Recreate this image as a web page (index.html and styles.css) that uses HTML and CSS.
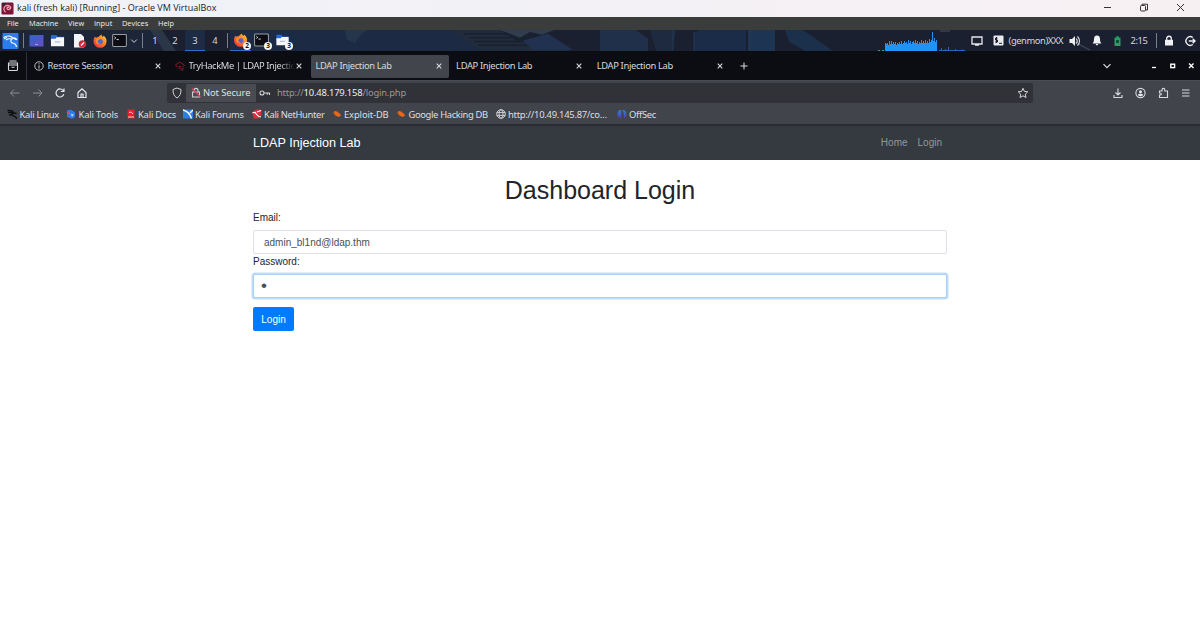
FILE: index.html
```html
<!DOCTYPE html>
<html lang="en">
<head>
    <meta charset="UTF-8">
    <meta name="viewport" content="width=device-width, initial-scale=1.0">
    <title>LDAP Injection Lab</title>
    <link rel="stylesheet" href="styles.css">
</head>
<body>
    <!-- shared icons -->
    <svg class="defs" width="0" height="0">
        <defs>
            <linearGradient id="fire" x1="1" y1="0" x2="0" y2="1">
                <stop offset="0" stop-color="#ffd83a"/>
                <stop offset=".5" stop-color="#ff7425"/>
                <stop offset="1" stop-color="#e9274d"/>
            </linearGradient>
            <linearGradient id="desk" x1="0" y1="0" x2="1" y2="1">
                <stop offset="0" stop-color="#2f62cf"/>
                <stop offset="1" stop-color="#6a4fc0"/>
            </linearGradient>
            <linearGradient id="offsec" x1="0" y1="0" x2="0" y2="1">
                <stop offset="0" stop-color="#2389d6"/>
                <stop offset="1" stop-color="#5a35c4"/>
            </linearGradient>
        </defs>
        <symbol id="i-firefox" viewBox="0 0 16 16">
            <path d="M2.2 3.2c.6.2 1 .6 1.4 1.1C4.7 3.500 5.500 3.500 6 3.600 7 2.500 8.500 1.200 9.800.5c-.1 1.300.6 2 1.600 2.700.5-.4.7-.9.7-1.500 2 1.600 3.400 3.900 3.400 6.600A7.400 7.400 0 0 1 .6 8.500C.5 6.500 1 4.700 2.200 3.200z" fill="url(#fire)"/>
            <circle cx="8.200" cy="8.700" r="3" fill="#5063d8"/>
            <path d="M3 6c2-1.500 4-1 5.200.3-1.500.1-2.700.9-2.700 2.200 0 1.500 1.300 2.500 3 2.300-2 1.700-5 .5-5.500-2z" fill="#ff8a20"/>
        </symbol>
        <symbol id="i-folder" viewBox="0 0 16 16">
            <path d="M1 2h6l1 2h7v5H1z" fill="#2468d8"/>
            <path d="M1 6h5l1-1.500h8V14H1z" fill="#f4f6fa"/>
            <path d="M5 9.500h6" stroke="#9aabc9" stroke-width="1"/>
        </symbol>
        <symbol id="i-term" viewBox="0 0 16 14">
            <rect x=".6" y=".6" width="14.800" height="12.800" rx="1" fill="#0b0d12" stroke="#9b9da3" stroke-width="1.100"/>
            <path d="M2.500 3l1.500 1.200-1.500 1.200M4.800 6h2.400" fill="none" stroke="#fff" stroke-width=".9"/>
        </symbol>
        <symbol id="i-x" viewBox="0 0 8 8">
            <path d="M1.700 1.700l4.600 4.600M6.300 1.700l-4.600 4.600" stroke="currentColor" stroke-width="1.100" fill="none"/>
        </symbol>
        <symbol id="i-chev" viewBox="0 0 10 10">
            <path d="M1.500 3.200L5 6.700l3.500-3.500" stroke="currentColor" stroke-width="1.200" fill="none"/>
        </symbol>
        <symbol id="i-edb" viewBox="0 0 10 10">
            <path d="M1.500 3l1.500-1 2 .6 3 2.200.8 2L7 8 4.800 7.300 2.500 5.500z" fill="#e8671b"/>
            <path d="M.5 4l2 .3M3.500 7l-.5 1.300M6 2.500l.6-1M8.500 5l1-.4" stroke="#a84a18" stroke-width=".6"/>
        </symbol>
    </svg>

    <div class="vm-title">
        <svg class="vm-icon" viewBox="0 0 14 14">
            <rect x=".5" y=".5" width="13" height="13" rx="1.500" fill="#7c1735"/>
            <path d="M1 1h5L2 5z" fill="#2d2b38"/>
            <path d="M10.500 5.500A4 4 0 1 0 5 11M10.500 5.500C10.500 9 6 9 6.500 6.500c.5-1.500 2.500-1 2 .3" fill="none" stroke="#f2a5b8" stroke-width="1.300"/>
        </svg>
        <span class="vm-name">kali (fresh kali) [Running] - Oracle VM VirtualBox</span>
        <svg class="vm-controls" viewBox="0 0 90 17">
            <g fill="none" stroke="#333" stroke-width="1">
                <path d="M4 7.500h7"/>
                <rect x="40.500" y="5.500" width="5" height="5.500" rx="1"/>
                <path d="M42 5.500V4.200h5.500V10H46"/>
                <path d="M77 4l7 7M84 4l-7 7"/>
            </g>
        </svg>
    </div>

    <div class="vm-menu">
        <span class="m-file">File</span>
        <span class="m-machine">Machine</span>
        <span class="m-view">View</span>
        <span class="m-input">Input</span>
        <span class="m-devices">Devices</span>
        <span class="m-help">Help</span>
    </div>

    <div class="panel">
        <svg class="wallpaper" viewBox="0 0 1200 22" preserveAspectRatio="none">
            <rect width="1200" height="22" fill="#1b2030"/>
            <path d="M0 0h155l15 22H0z" fill="#1d2639"/>
            <path d="M150 0h12l14 22h-12z" fill="#2b3647"/>
            <path d="M230 0h235l20 22H230z" fill="#1c2a44"/>
            <path d="M345 0h22l-6 5-6 9-8-4z" fill="#26364a"/>
            <path d="M450 0h50l16 11h20l34 11H480z" fill="#202b3b"/>
            <path d="M464 4h48M469 8h56M474 12h66M478 16h70" stroke="#18202e" stroke-width="1.500"/>
            <path d="M500 0h54l-12 5-12-3-10 6z" fill="#2f3d4e"/>
            <path d="M548 4l25 17h-40l-10-10z" fill="#20324f"/>
            <path d="M600 0h36l12 9v13h-48z" fill="#20304b"/>
            <path d="M650 0h26l-4 22h-16z" fill="#1d2a40"/>
            <path d="M694 3l6-3h46v22h-52z" fill="#1b2c48"/>
            <path d="M748 0h27v22h-27z" fill="#1d3452"/>
            <path d="M785 0h18l30 22h-28l-16-10z" fill="#1b304b"/>
            <path d="M673 0v22M694 2v20M750 0v22" stroke="#283a54" stroke-width="1"/>
            <path d="M940 1h10M1070 10l20 11" stroke="#384252" stroke-width="1.500"/>
        </svg>
        <div class="panel-row">
            <svg class="kali" viewBox="0 0 17 16">
                <rect x=".5" width="16" height="16" rx="1" fill="#2b7df0"/>
                <path d="M1.500 4.500C5 2.500 8.500 2.500 11 5l3 1.500M4 7c2-1.500 4-1.500 6-1-2 1.500-1.500 4 1.500 4.200 1.800.2 2.700 1.500 3 3.800M11 5c2.500-.5 3.500.5 4 2M2 5.800l3-1.200" fill="none" stroke="#fff" stroke-width="1.100"/>
            </svg>
            <i class="sep sep-a"></i>
            <svg class="desk" viewBox="0 0 14 12">
                <rect width="14" height="11.500" rx=".6" fill="url(#desk)"/>
                <path d="M5.500 9.500h3" stroke="#b7b4ea" stroke-width=".8"/>
            </svg>
            <svg class="files"><use href="#i-folder"/></svg>
            <svg class="doc" viewBox="0 0 14 14">
                <path d="M1 0h7l3 3v10.500H1z" fill="#f3f4f7"/>
                <circle cx="9.500" cy="10" r="3.800" fill="#d22a3c"/>
                <path d="M8 11.500l3-3" stroke="#fff" stroke-width="1.200"/>
            </svg>
            <svg class="fox"><use href="#i-firefox"/></svg>
            <svg class="term"><use href="#i-term"/></svg>
            <svg class="drop"><use href="#i-chev"/></svg>
            <i class="sep sep-b"></i>
            <span class="space">1</span>
            <span class="space">2</span>
            <span class="space current">3</span>
            <span class="space">4</span>
            <i class="sep sep-c"></i>
            <div class="task active"><svg><use href="#i-firefox"/></svg><b>2</b></div>
            <div class="task"><svg><use href="#i-term"/></svg><b>3</b></div>
            <div class="task"><svg><use href="#i-folder"/></svg><b>3</b></div>

            <svg class="cpu" viewBox="0 0 88 19">
                <path d="M7 19V11h1v1h1v-1h1v2h1v-4h1v3h1V9h1v3h1v-2h1v2h1v-2h1v3h1v-2h1v1h1v-2h1v2h1v-3h1v3h1v-1h1v-2h1v2h1v-1h1v2h1v-4h1v3h1v-2h1v3h1v-2h1v-1h1v2h1V8h1v3h1v-2h1v3h1v-2h1v1h1V8h1v3h1V9h1v2h1V8h1v3h1V9h1v2h1V7h1v3h1V8h1V0h1v9h1V6h1v4h1V8h1v11z" fill="#2492f5"/>
                <path d="M63.500 19v-3M67.500 19v-2M70.500 19v-4M73.500 19v-1M77.500 19v-2M80.500 19v-1M84.500 19v-1.500M61 18.500h26" stroke="#2c62c8"/>
                <path d="M0 18.500h2M4 18.500h2" stroke="#35a080"/>
            </svg>
            <svg class="tray-mon" viewBox="0 0 12 12"><path d="M1 2h10v7H1zM4 10h4" fill="none" stroke="#e4e6ea" stroke-width="1.300"/></svg>
            <svg class="tray-gen" viewBox="0 0 11 11">
                <rect x=".5" y=".5" width="10" height="10" rx="1" fill="#e9eaee"/>
                <path d="M4.500 3H2.500v2H4.500v2H2M3.500 2v6M6 8.300h3" fill="none" stroke="#1b2132" stroke-width="1"/>
            </svg>
            <span class="genmon">(genmon)XXX</span>
            <svg class="tray-vol" viewBox="0 0 12 12">
                <path d="M.5 4H3l3-3v10L3 8H.5z" fill="#eceef1"/>
                <path d="M7.200 3.500c1.300 1.500 1.300 3.500 0 5M8.500 1.500c2.700 2.500 2.700 6.500 0 9" fill="none" stroke="#dfe1e6" stroke-width="1.100"/>
            </svg>
            <svg class="tray-bell" viewBox="0 0 10 11"><path d="M5 .5c2.200 0 3 1.700 3 3.500 0 2.500.5 3.500 1.500 4.500H.5C1.500 7.500 2 6.500 2 4 2 2.200 2.800.5 5 .5zM3.700 9h2.600c0 1.800-2.600 1.800-2.600 0z" fill="#f2f3f5"/></svg>
            <svg class="tray-bat" viewBox="0 0 7 10"><path d="M2.500 0h2v1.500H6.500V10H.5V1.500h2z" fill="#23a066"/><rect x="2.200" y="4" width="2.600" height="3" fill="#123f30"/></svg>
            <span class="clock">2:15</span>
            <i class="sep sep-d"></i>
            <svg class="tray-lock" viewBox="0 0 10 11"><path d="M1 4.800h8v5.700H1z" fill="#f0f1f3"/><path d="M2.700 5V3.500c0-3 4.600-3 4.600 0V5" fill="none" stroke="#f0f1f3" stroke-width="1.300"/></svg>
            <svg class="tray-out" viewBox="0 0 12 12"><path d="M8.800 2.500a4.300 4.300 0 1 0 0 7M4.800 6h6M8.700 3.800L11 6 8.700 8.200" fill="none" stroke="#eceef1" stroke-width="1.400"/></svg>
        </div>
    </div>

    <div class="tabs">
        <div class="tab-view">
            <svg viewBox="0 0 12 12"><path d="M2.500 1h7M1.500 3h9v6.500a1 1 0 0 1-1 1h-7a1 1 0 0 1-1-1zM1.500 5h9M4.500 7.200h3" fill="none" stroke="#d9dade" stroke-width="1.100"/></svg>
        </div>
        <div class="tab tab-restore">
            <svg class="tab-ico" viewBox="0 0 10 10"><circle cx="5" cy="5" r="4.200" fill="none" stroke="#cfd0d4" stroke-width=".9"/><path d="M5 2.300v1.100M5 4.300v3.200" stroke="#cfd0d4" stroke-width="1"/></svg>
            <span>Restore Session</span>
            <svg class="close"><use href="#i-x"/></svg>
        </div>
        <div class="tab tab-thm">
            <svg class="tab-ico" viewBox="0 0 10 10"><path d="M2.500 5.500C0 5.500.3 2.800 2.400 3 3 .8 6.500.8 7 3c2.500-.2 3 2.500.8 2.600M4 5.500h2M3.500 7.300h2M6.500 7.300h2M5.500 9h3" fill="none" stroke="#8e1e2b" stroke-width="1"/></svg>
            <span class="fade">TryHackMe | LDAP Injectic</span>
            <svg class="close"><use href="#i-x"/></svg>
        </div>
        <div class="tab selected">
            <span>LDAP Injection Lab</span>
            <svg class="close"><use href="#i-x"/></svg>
        </div>
        <div class="tab">
            <span>LDAP Injection Lab</span>
            <svg class="close"><use href="#i-x"/></svg>
        </div>
        <div class="tab">
            <span>LDAP Injection Lab</span>
            <svg class="close"><use href="#i-x"/></svg>
        </div>
        <svg class="new-tab" viewBox="0 0 8 8"><path d="M4 .5v7M.5 4h7" stroke="#dcdde0" stroke-width="1"/></svg>
        <svg class="all-tabs"><use href="#i-chev"/></svg>
        <svg class="win" viewBox="0 0 46 10">
            <path d="M2 6.500h4" stroke="#fff" stroke-width="1.300"/>
            <rect x="20.800" y="3.200" width="3.800" height="3.400" fill="none" stroke="#fff" stroke-width="1.400"/>
            <path d="M39 2.500l4.500 4.500M43.500 2.500L39 7" stroke="#fff" stroke-width="1.400"/>
        </svg>
    </div>

    <div class="toolbar">
        <svg class="nav-btns" viewBox="0 0 90 22">
            <g fill="none" stroke="#8b8d93" stroke-width="1">
                <path d="M19.500 11h-9M14 7.500L10.500 11l3.500 3.500"/>
                <path d="M33 11h9M38.500 7.500L42 11l-3.500 3.500"/>
            </g>
            <g fill="none" stroke="#e6e7ea" stroke-width="1.200">
                <path d="M63.500 9a4 4 0 1 0 .3 3.300M64 6.500v3h-3.200"/>
                <path d="M78 10.500l4-3.700 4 3.700v5h-8zM81 15.500V12h2v3.500"/>
            </g>
        </svg>
        <div class="urlbar">
            <svg class="shield" viewBox="0 0 10 12"><path d="M5 1l4 1.500c0 4-.8 6.500-4 8.500C1.800 9 1 6.500 1 2.500z" fill="none" stroke="#d0d1d5" stroke-width="1"/></svg>
            <div class="not-secure">
                <svg viewBox="0 0 10 11"><path d="M1.500 5h7v5h-7zM3 5V3.500c0-2.800 4-2.800 4 0V5" fill="none" stroke="#d0d1d5" stroke-width="1.100"/><path d="M1 1.500L9.500 10" stroke="#e2405f" stroke-width="1.200"/></svg>
                <span>Not Secure</span>
            </div>
            <svg class="key" viewBox="0 0 12 8"><circle cx="3" cy="4" r="2" fill="none" stroke="#d0d1d5" stroke-width="1.100"/><path d="M5 4h6M8.300 4v1.700M10.500 4v2" stroke="#d0d1d5" stroke-width="1.100"/></svg>
            <span class="url">http://<em>10.48.179.158</em>/login.php</span>
            <svg class="star" viewBox="0 0 12 12"><path d="M6 1.300l1.400 3.100 3.400.4-2.500 2.300.7 3.400L6 8.800l-3 1.700.7-3.400L1.200 4.800l3.400-.4z" fill="none" stroke="#d5d6da" stroke-width="1"/></svg>
        </div>
        <svg class="tools" viewBox="0 0 90 22">
            <g fill="none" stroke="#d8d9dd" stroke-width="1.100">
                <path d="M9 6.500V13M6.500 10.500L9 13l2.500-2.500M5 13v2.500h8V13"/>
                <circle cx="31.500" cy="11" r="4.600"/>
                <path d="M50.500 9h2.500V8c0-2.200 2.800-2.200 2.800 0v1h2.700v6.500h-8V13c2.500.3 2.500-2 0-2z"/>
                <path d="M73 8h7.500M73 11h7.500M73 14h7.500"/>
            </g>
            <circle cx="31.500" cy="9.800" r="1.500" fill="#e9eaee"/>
            <path d="M28.700 13c1-1.600 4.600-1.600 5.600 0-1 1.500-4.600 1.500-5.600 0z" fill="#e9eaee"/>
        </svg>
    </div>

    <div class="bookmarks">
        <div class="bm bm-linux">
            <svg viewBox="0 0 10 10"><path d="M.5 1.500c3-.5 5.500.5 6.500 2.500l2.500.5M1 3.500c2-.5 4 0 5 1-1 1.500 0 2.500 1.500 2.800S9.500 8.500 9.500 10M2 5.500l3 .5" fill="none" stroke="#0c0d10" stroke-width="1.300"/></svg>Kali Linux
        </div>
        <div class="bm bm-tools">
            <svg viewBox="0 0 10 10"><path d="M1 1.500l3.500-1L9 3v5L6 9.700 1 8z" fill="#2f7be6"/><path d="M.5 3.500l2.500-.8L4 4.500 2.500 5.500z" fill="#d9488d"/><path d="M4.500 4.500l3.500 1-2 2.500z" fill="#a8cdf6"/></svg>Kali Tools
        </div>
        <div class="bm bm-docs">
            <svg viewBox="0 0 10 10"><path d="M1.500.5h7v9h-7z" fill="#e2222c"/><path d="M3 3.500c2-.8 3 0 4 1.500M2 8h6" stroke="#fff" stroke-width=".8" fill="none"/></svg>Kali Docs
        </div>
        <div class="bm bm-forums">
            <svg viewBox="0 0 10 10"><path d="M0 .5h10v9H0z" fill="#2b7de8"/><path d="M0 1c4 1 7 4 8.500 8.500M10 1L7 4" stroke="#fff" stroke-width="1.400" fill="none"/></svg>Kali Forums
        </div>
        <div class="bm bm-hunter">
            <svg viewBox="0 0 10 10"><path d="M.5 3.500L4 .5h5.500v6L6 9.500H1.500z" fill="#dc2b3a"/><path d="M.5 4c4-3 3 4 8.500 4M5 3l4-1.500" stroke="#fff" stroke-width="1.200" fill="none"/></svg>Kali NetHunter
        </div>
        <div class="bm bm-edb"><svg><use href="#i-edb"/></svg>Exploit-DB</div>
        <div class="bm bm-ghdb"><svg><use href="#i-edb"/></svg>Google Hacking DB</div>
        <div class="bm bm-http">
            <svg viewBox="0 0 10 10"><g fill="none" stroke="#d9dade" stroke-width=".9"><circle cx="5" cy="5" r="4.300"/><ellipse cx="5" cy="5" rx="2" ry="4.300"/><path d="M.7 3.600h8.600M.7 6.400h8.600"/></g></svg>http://10.49.145.87/co…
        </div>
        <div class="bm bm-offsec">
            <svg viewBox="0 0 10 10"><path d="M4.300 1v8C1.500 9 .5 7 .5 5s1-4 3.800-4zM5.500.8C8.500 1 9.500 3 9.500 5S8.500 9 7 9.300C7.200 6 6.500 3 5.500.8z" fill="url(#offsec)"/></svg>OffSec
        </div>
    </div>

    <nav class="navbar">
        <div class="container">
            <a class="brand">LDAP Injection Lab</a>
            <a class="link">Home</a>
            <a class="link">Login</a>
        </div>
    </nav>

    <main class="container page">
        <h1>Dashboard Login</h1>
        <form>
            <label for="email">Email:</label>
            <input type="text" id="email" class="field" value="admin_bl1nd@ldap.thm">
            <label for="password">Password:</label>
            <input type="password" id="password" class="field focused" value="a">
            <button type="button" class="btn">Login</button>
        </form>
    </main>
</body>
</html>
```
FILE: styles.css
```css
* {
    box-sizing: border-box;
}

body {
    margin: 0;
    height: 618px;
    overflow: hidden;
    background: #fff;
    font-family: "Noto Sans", sans-serif;
    font-size: 9.4px;
}

svg {
    display: block;
    flex: none;
}

.defs {
    position: absolute;
}

/* VirtualBox window */
.vm-title {
    height: 17px;
    display: flex;
    align-items: center;
    background: linear-gradient(90deg, #eff2f8, #f7f0f3);
    color: #222;
    padding-left: 1px;
}

.vm-icon {
    width: 13px;
    height: 13px;
    margin-right: 3px;
}

.vm-name {
    font-family: "Open Sans", sans-serif;
    font-size: 9px;
    line-height: 15px;
    padding-bottom: 2px;
}

.vm-controls {
    width: 90px;
    height: 17px;
    margin-left: auto;
    margin-right: 10px;
}

.vm-menu {
    height: 13px;
    display: flex;
    align-items: center;
    padding-left: 7px;
    background: #3b3c3c;
    color: #f0f0f0;
    font-family: "Open Sans", sans-serif;
    font-size: 7.4px;
    line-height: 13px;
}

.m-file { width: 22px; }
.m-machine { width: 39px; }
.m-view { width: 26px; }
.m-input { width: 28px; }
.m-devices { width: 36px; }

/* desktop panel */
.panel {
    position: relative;
    height: 22px;
    background: #1b2132;
    border-bottom: 1px solid #0a0c14;
}

.wallpaper {
    position: absolute;
    left: 0;
    top: 0;
    width: 100%;
    height: 21px;
}

.panel-row {
    position: relative;
    display: flex;
    align-items: center;
    height: 21px;
    padding-left: 2px;
    color: #d3d7de;
}

.sep {
    width: 1px;
    height: 15px;
    background: #78808c;
}

.kali { width: 17px; height: 16px; }
.sep-a { margin: 0 5px 0 4px; }
.desk { width: 15px; height: 12px; margin-right: 6px; }
.files { width: 15px; height: 15px; margin-right: 8px; }
.doc { width: 14px; height: 14px; margin-right: 6px; }
.fox { width: 14px; height: 14px; margin-right: 5px; }
.term { width: 15px; height: 13px; margin-right: 3px; }
.drop { width: 8px; height: 8px; margin-right: 4px; }
.sep-b { margin-right: 2px; }
.sep-c { margin: 0 2px 0 2px; }

.space {
    width: 20px;
    height: 21px;
    line-height: 21px;
    text-align: center;
}

.space.current {
    border-bottom: 1px solid #2f6fd0;
    background: #1d2b44;
}

.task {
    position: relative;
    width: 21px;
    height: 21px;
    padding: 3px 0 0 3px;
}

.task.active {
    border-bottom: 1px solid #2f6fd0;
}

.task svg {
    width: 15px;
    height: 14px;
}

.task b {
    position: absolute;
    right: 0;
    bottom: 1px;
    width: 8px;
    height: 8px;
    border-radius: 50%;
    background: #f4f4f4;
    color: #111;
    font-size: 6.5px;
    line-height: 8px;
    text-align: center;
}

.task.active b {
    bottom: 0;
}

.cpu { width: 88px; height: 19px; margin-left: auto; margin-right: 5px; margin-top: 2px; }
.tray-mon { width: 12px; height: 12px; margin-right: 10px; }
.tray-gen { width: 11px; height: 11px; margin-right: 5px; }
.genmon { width: 60px; letter-spacing: -0.42px; }
.tray-vol { width: 12px; height: 12px; margin-right: 11px; }
.tray-bell { width: 10px; height: 11px; margin-right: 12px; }
.tray-bat { width: 7px; height: 10px; margin-right: 10px; }
.clock { width: 25px; letter-spacing: -0.4px; }
.sep-d { margin-right: 7px; }
.tray-lock { width: 10px; height: 11px; margin-right: 10px; }
.tray-out { width: 12px; height: 12px; margin-right: 4.500px; }

/* browser */
.tabs {
    height: 28px;
    display: flex;
    align-items: center;
    background: #0c0d12;
    color: #d7d8dc;
    letter-spacing: -0.35px;
}

.tab-view {
    width: 27px;
    height: 28px;
    padding: 8px 0 0 7px;
    border-right: 1px solid #2e3038;
}

.tab-view svg {
    width: 12px;
    height: 12px;
}

.tab {
    width: 138px;
    height: 23px;
    margin-right: 2.6px;
    padding: 0 6px 1px 5px;
    display: flex;
    align-items: center;
    border-radius: 2px;
    white-space: nowrap;
}

.tab.selected {
    background: #43454c;
}

.tab-restore { width: 139px; padding: 0 4px 1px 7px; margin-right: 2px; letter-spacing: -0.27px; }
.tab-thm { width: 138px; margin-right: 4.500px; padding: 0 4px 1px 7px; }

.tab-ico {
    width: 10px;
    height: 10px;
    margin-right: 3.500px;
}

.close {
    width: 8px;
    height: 8px;
    margin-left: auto;
}

.tab-thm .close {
    margin-right: 1px;
}

.fade {
    letter-spacing: -0.4px;
    -webkit-mask-image: linear-gradient(90deg, #000 85%, transparent);
    mask-image: linear-gradient(90deg, #000 85%, transparent);
}

.new-tab { width: 8px; height: 8px; margin-left: 8px; }
.all-tabs { width: 10px; height: 10px; margin-left: auto; color: #dcdde0; }
.win { width: 46px; height: 10px; margin: 0 4px 0 38px; }

.toolbar {
    height: 24px;
    display: flex;
    align-items: center;
    background: #42444b;
    border-top: 1px solid #4a4c53;
}

.nav-btns {
    width: 90px;
    height: 22px;
}

.urlbar {
    width: 866px;
    height: 20px;
    margin-left: 77px;
    display: flex;
    align-items: center;
    border-radius: 2px;
    background: #313238;
    color: #96979c;
    letter-spacing: -0.18px;
}

.urlbar em {
    font-style: normal;
    color: #eeeef0;
}

.shield { width: 10px; height: 12px; margin: 0 4px 0 5px; }

.not-secure {
    width: 70px;
    height: 18px;
    display: flex;
    align-items: center;
    padding-left: 5px;
    background: #4a4b50;
    color: #dfe0e3;
    border-radius: 1px;
    white-space: nowrap;
    letter-spacing: -0.1px;
}

.not-secure svg { width: 10px; height: 11px; margin-right: 2px; }
.key { width: 12px; height: 8px; margin: 0 6px 0 3px; }
.star { width: 12px; height: 12px; margin-left: auto; margin-right: 4px; }

.tools {
    width: 90px;
    height: 22px;
    margin-left: auto;
    margin-right: 1px;
}

.bookmarks {
    height: 22px;
    display: flex;
    align-items: center;
    padding-left: 7px;
    background: #42444b;
    border-bottom: 2px solid #2a2c32;
    color: #dedfe2;
    letter-spacing: -0.28px;
}

.bm {
    display: flex;
    align-items: center;
    white-space: nowrap;
}

.bm svg {
    width: 10px;
    height: 10px;
    margin-right: 2.500px;
}

.bm-linux { width: 59px; }
.bm-tools { width: 59.500px; letter-spacing: -0.15px; }
.bm-docs { width: 57px; letter-spacing: -0.2px; }
.bm-forums { width: 69px; }
.bm-hunter { width: 80px; letter-spacing: -0.33px; }
.bm-edb { width: 64.500px; letter-spacing: -0.12px; }
.bm-ghdb { width: 99.500px; letter-spacing: -0.35px; }
.bm-http { width: 121px; letter-spacing: -0.25px; }

/* lab page */
.container {
    width: 694px;
    margin: 0 auto;
}

.navbar {
    height: 34px;
    background: #343a40;
    font-family: "Liberation Sans", sans-serif;
}

.navbar .container {
    height: 34px;
    display: flex;
    align-items: center;
    padding-right: 5px;
}

.brand {
    color: #fff;
    font-size: 12.6px;
    margin-right: auto;
}

.link {
    color: #94979b;
    font-size: 10px;
    margin-left: 10px;
    padding-bottom: 1px;
}

.page {
    padding-top: 15px;
    color: #212529;
    font-family: "Liberation Sans", sans-serif;
    font-size: 10px;
    line-height: 15px;
}

.page h1 {
    margin: 0 0 5px;
    font-size: 25px;
    font-weight: 400;
    line-height: 30px;
    text-align: center;
}

.page label {
    display: block;
    margin-bottom: 5px;
}

.field {
    display: block;
    width: 100%;
    height: 24px;
    padding: 0 10px;
    border: 1px solid #dfe0ea;
    border-radius: 2px;
    background: #fff;
    color: #495057;
    font: inherit;
    outline: none;
}

.field.focused {
    padding-left: 7px;
    border-color: #a9d0fa;
    box-shadow: 0 0 0 1.500px #bfdcfa;
    font-size: 17px;
}

.btn {
    display: block;
    width: 41px;
    height: 24px;
    margin-top: 9.400px;
    padding: 0;
    border: none;
    border-radius: 2px;
    background: #007bff;
    color: #fff;
    font: inherit;
}
```
